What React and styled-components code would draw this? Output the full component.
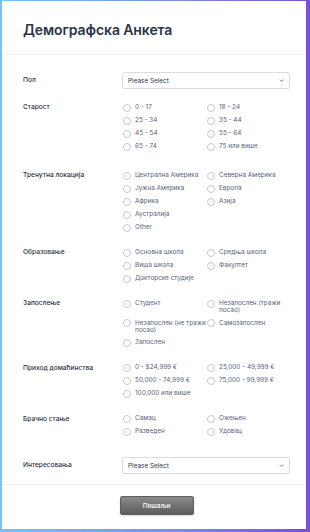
import React from 'react'
import styled, { createGlobalStyle } from 'styled-components'

const GlobalStyle = createGlobalStyle`
  html, body {
    margin: 0;
    padding: 0;
  }
  body {
    width: 310px;
    height: 532px;
    overflow: hidden;
    background: linear-gradient(90deg, #74c3fb 0%, #7a8fe8 55%, #7a4edb 100%);
    font-family: Inter, 'Noto Sans', sans-serif;
  }
  * {
    box-sizing: border-box;
  }
`

const fields = [
  { label: 'Пол', type: 'select' },
  {
    label: 'Старост',
    type: 'radio',
    extraBottom: 4,
    options: ['0 - 17', '18 - 24', '25 - 34', '35 - 44', '45 - 54', '55 - 64', '65 - 74', '75 или више'],
  },
  {
    label: 'Тренутна локација',
    type: 'radio',
    options: ['Централна Америка', 'Северна Америка', 'Јужна Америка', 'Европа', 'Африка', 'Азија', 'Аустралија', null, 'Other'],
  },
  {
    label: 'Образовање',
    type: 'radio',
    options: ['Основна школа', 'Средња школа', 'Виша школа', 'Факултет', 'Докторске студије'],
  },
  {
    label: 'Запослење',
    type: 'radio',
    options: ['Студент', 'Незапослен (тражи посао)', 'Незапослен (не тражи посао)', 'Самозапослен', 'Запослен'],
  },
  {
    label: 'Приход домаћинства',
    type: 'radio',
    options: ['0 - $24,999 €', '25,000 - 49,999 €', '50,000 - 74,999 €', '75,000 - 99,999 €', '100,000 или више'],
  },
  {
    label: 'Брачно стање',
    type: 'radio',
    options: ['Самац', 'Ожењен', 'Разведен', 'Удовац'],
  },
  { label: 'Интересовања', type: 'select', extraTop: 6.6 },
]

const Chevron = () => (
  <svg width="5" height="3" viewBox="0 0 5 3" fill="none">
    <path d="M0.6 0.5 L2.5 2.4 L4.4 0.5" stroke="#57647e" strokeWidth="0.7" />
  </svg>
)

const App = () => {
  return (
    <>
      <GlobalStyle />
      <Card>
        <Header>
          <Title>Демографска Анкета</Title>
        </Header>
        <Body>
          {fields.map((field) => (
            <Section key={field.label} $top={field.extraTop || 0} $bottom={field.extraBottom || 0}>
              <Label $select={field.type === 'select'}>{field.label}</Label>
              {field.type === 'select' ? (
                <Select>
                  <span>Please Select</span>
                  <Chevron />
                </Select>
              ) : (
                <Options>
                  {field.options.map((option, i) =>
                    option ? (
                      <Option key={i}>
                        <Radio />
                        <OptionText>{option}</OptionText>
                      </Option>
                    ) : (
                      <span key={i} />
                    )
                  )}
                </Options>
              )}
            </Section>
          ))}
        </Body>
        <Footer>
          <SubmitButton>Пошаљи</SubmitButton>
        </Footer>
      </Card>
    </>
  )
}

export default App

const Card = styled.div`
  margin: 1px 4px 3px 2px;
  height: 528px;
  background: #ffffff;
  display: flex;
  flex-direction: column;
`
const Header = styled.div`
  height: 54px;
  padding: 20px 0 0 21px;
  border-bottom: 1px solid #eef0f6;
`
const Title = styled.h1`
  margin: 0;
  font-size: 14px;
  line-height: 17px;
  font-weight: 600;
  color: #2c3345;
  letter-spacing: -0.1px;
`
const Body = styled.div`
  padding: 11px 0 3.5px 21px;
`
const Section = styled.div`
  display: grid;
  grid-template-columns: 99px 168px;
  align-items: start;
  padding: ${(p) => 6 + p.$top}px 0 ${(p) => 6 + p.$bottom}px;
`
const Label = styled.div`
  font-size: 6.6px;
  font-weight: 500;
  color: #2c3345;
  line-height: ${(p) => (p.$select ? '17px' : '13px')};
`
const Select = styled.div`
  height: 17px;
  border: 1px solid #d9dce6;
  border-radius: 2px;
  display: flex;
  align-items: center;
  justify-content: space-between;
  padding: 0 5px 0 5px;
  font-size: 6.4px;
  color: #2c3345;
  box-shadow: 0 1px 1px rgba(0, 0, 0, 0.02);
`
const Options = styled.div`
  display: grid;
  grid-template-columns: 84px 84px;
`
const Option = styled.div`
  display: flex;
  align-items: flex-start;
  padding: 2px 0;
`
const Radio = styled.span`
  flex: none;
  width: 8px;
  height: 8px;
  margin: 0.5px 4.5px 0.5px 0.5px;
  border: 0.7px solid #c3c8d4;
  border-radius: 50%;
  background: #ffffff;
`
const OptionText = styled.span`
  padding-top: 0.7px;
  font-size: 6.4px;
  line-height: 7.6px;
  color: #57647e;
  max-width: 71px;
`
const Footer = styled.div`
  border-top: 1px solid #eef0f6;
  padding-top: 11.3px;
  display: flex;
  justify-content: center;
`
const SubmitButton = styled.button`
  width: 74px;
  height: 19px;
  margin-left: 5px;
  border: 1px solid #5e5e5e;
  border-radius: 2px;
  background: linear-gradient(180deg, #8b8b8b 0%, #5c5c5c 100%);
  color: #f4f4f4;
  font-family: Inter, 'Noto Sans', sans-serif;
  font-size: 6.4px;
  font-weight: 600;
  cursor: pointer;
  box-shadow: 0 1px 2px rgba(0, 0, 0, 0.15);
`
